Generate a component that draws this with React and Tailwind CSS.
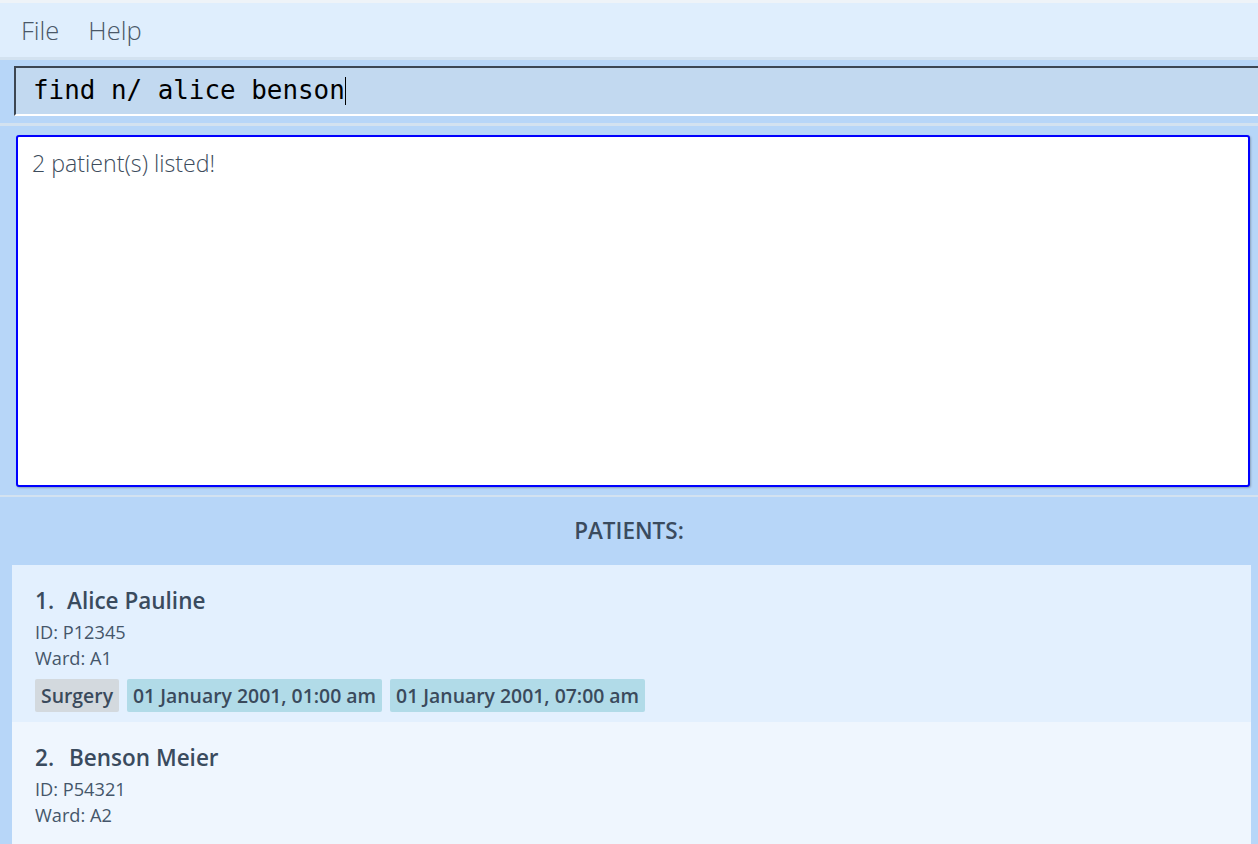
import React from "react";

const sans = { fontFamily: '"Open Sans", "Noto Sans", sans-serif' };

function Tag({ children, grey }) {
  return (
    <div
      className={`h-[33px] flex items-center px-[6px] rounded-[2px] text-[19.4px] font-semibold text-[#3a4a5c] ${
        grey ? "bg-[#d3d9de]" : "bg-[#b1dbe8]"
      }`}
    >
      {children}
    </div>
  );
}

function Card({ idx, name, id, ward, tags, bg, height, gap }) {
  return (
    <div className={`${bg} pl-[23px] pt-[22px]`} style={{ height }}>
      <div className="text-[22.5px] font-semibold text-[#3a4b5e] leading-[28px] flex">
        <span style={{ width: gap }}>{idx}.</span>
        <span>{name}</span>
      </div>
      <div className="text-[18.2px] text-[#45566a] leading-[26px] mt-[4px]">ID: {id}</div>
      <div className="text-[18.2px] text-[#45566a] leading-[26px]">Ward: {ward}</div>
      {tags && (
        <div className="flex gap-[8px] mt-[8px]">
          {tags.map((t, i) => (
            <Tag key={i} grey={t.grey}>
              {t.label}
            </Tag>
          ))}
        </div>
      )}
    </div>
  );
}

export default function App() {
  return (
    <div className="w-[1258px] h-[844px] overflow-hidden bg-[#b7d6f8] flex flex-col" style={sans}>
      <div className="h-[3px] bg-[#eef3f8]" />
      <div className="h-[54px] bg-[#dfeefd] flex items-center pl-[21px] gap-[29px] text-[25.5px] font-light text-[#4a5868]">
        <span>File</span>
        <span>Help</span>
      </div>
      <div className="h-[3px] bg-[#d3e2f0]" />
      <div className="pt-[6px] pb-[7px]">
        <div className="ml-[14px] h-[50px] border-t-2 border-l-2 border-b-2 border-t-[#3c4652] border-l-[#3c4652] border-b-white bg-[#c2d9f0] flex items-center pl-[17px]">
          <span
            className="text-[25.9px] text-black leading-none"
            style={{ fontFamily: '"DejaVu Sans Mono", "Liberation Mono", monospace' }}
          >
            find n/ alice benson
          </span>
          <span className="w-[1px] h-[28px] bg-black" />
        </div>
      </div>
      <div className="h-[3px] bg-[#d3e2f0]" />
      <div className="pt-[9px] pl-[16px] pr-[8px]">
        <div className="h-[352px] bg-white border-2 border-[#0000ff] rounded-[3px] shadow-[1px_1px_2px_rgba(0,0,0,0.25)] pl-[14px] pt-[10px]">
          <div className="text-[23.2px] font-light text-[#3d4c5c] leading-[32px]">2 patient(s) listed!</div>
        </div>
      </div>
      <div className="h-[8px]" />
      <div className="h-[2px] bg-[#d3e2f0]" />
      <div className="h-[68px] flex items-center justify-center text-[22.5px] font-semibold text-[#3a4b5e]">
        PATIENTS:
      </div>
      <div className="pl-[12px] pr-[7px] flex-1 flex flex-col">
        <Card
          idx={1}
          name="Alice Pauline"
          id="P12345"
          ward="A1"
          bg="bg-[#e3f0fe]"
          height={157}
          gap={32}
          tags={[
            { label: "Surgery", grey: true },
            { label: "01 January 2001, 01:00 am" },
            { label: "01 January 2001, 07:00 am" },
          ]}
        />
        <div className="flex-1 bg-[#eff6fe]">
          <Card idx={2} name="Benson Meier" id="P54321" ward="A2" bg="bg-[#eff6fe]" height={122} gap={34} />
        </div>
      </div>
    </div>
  );
}
